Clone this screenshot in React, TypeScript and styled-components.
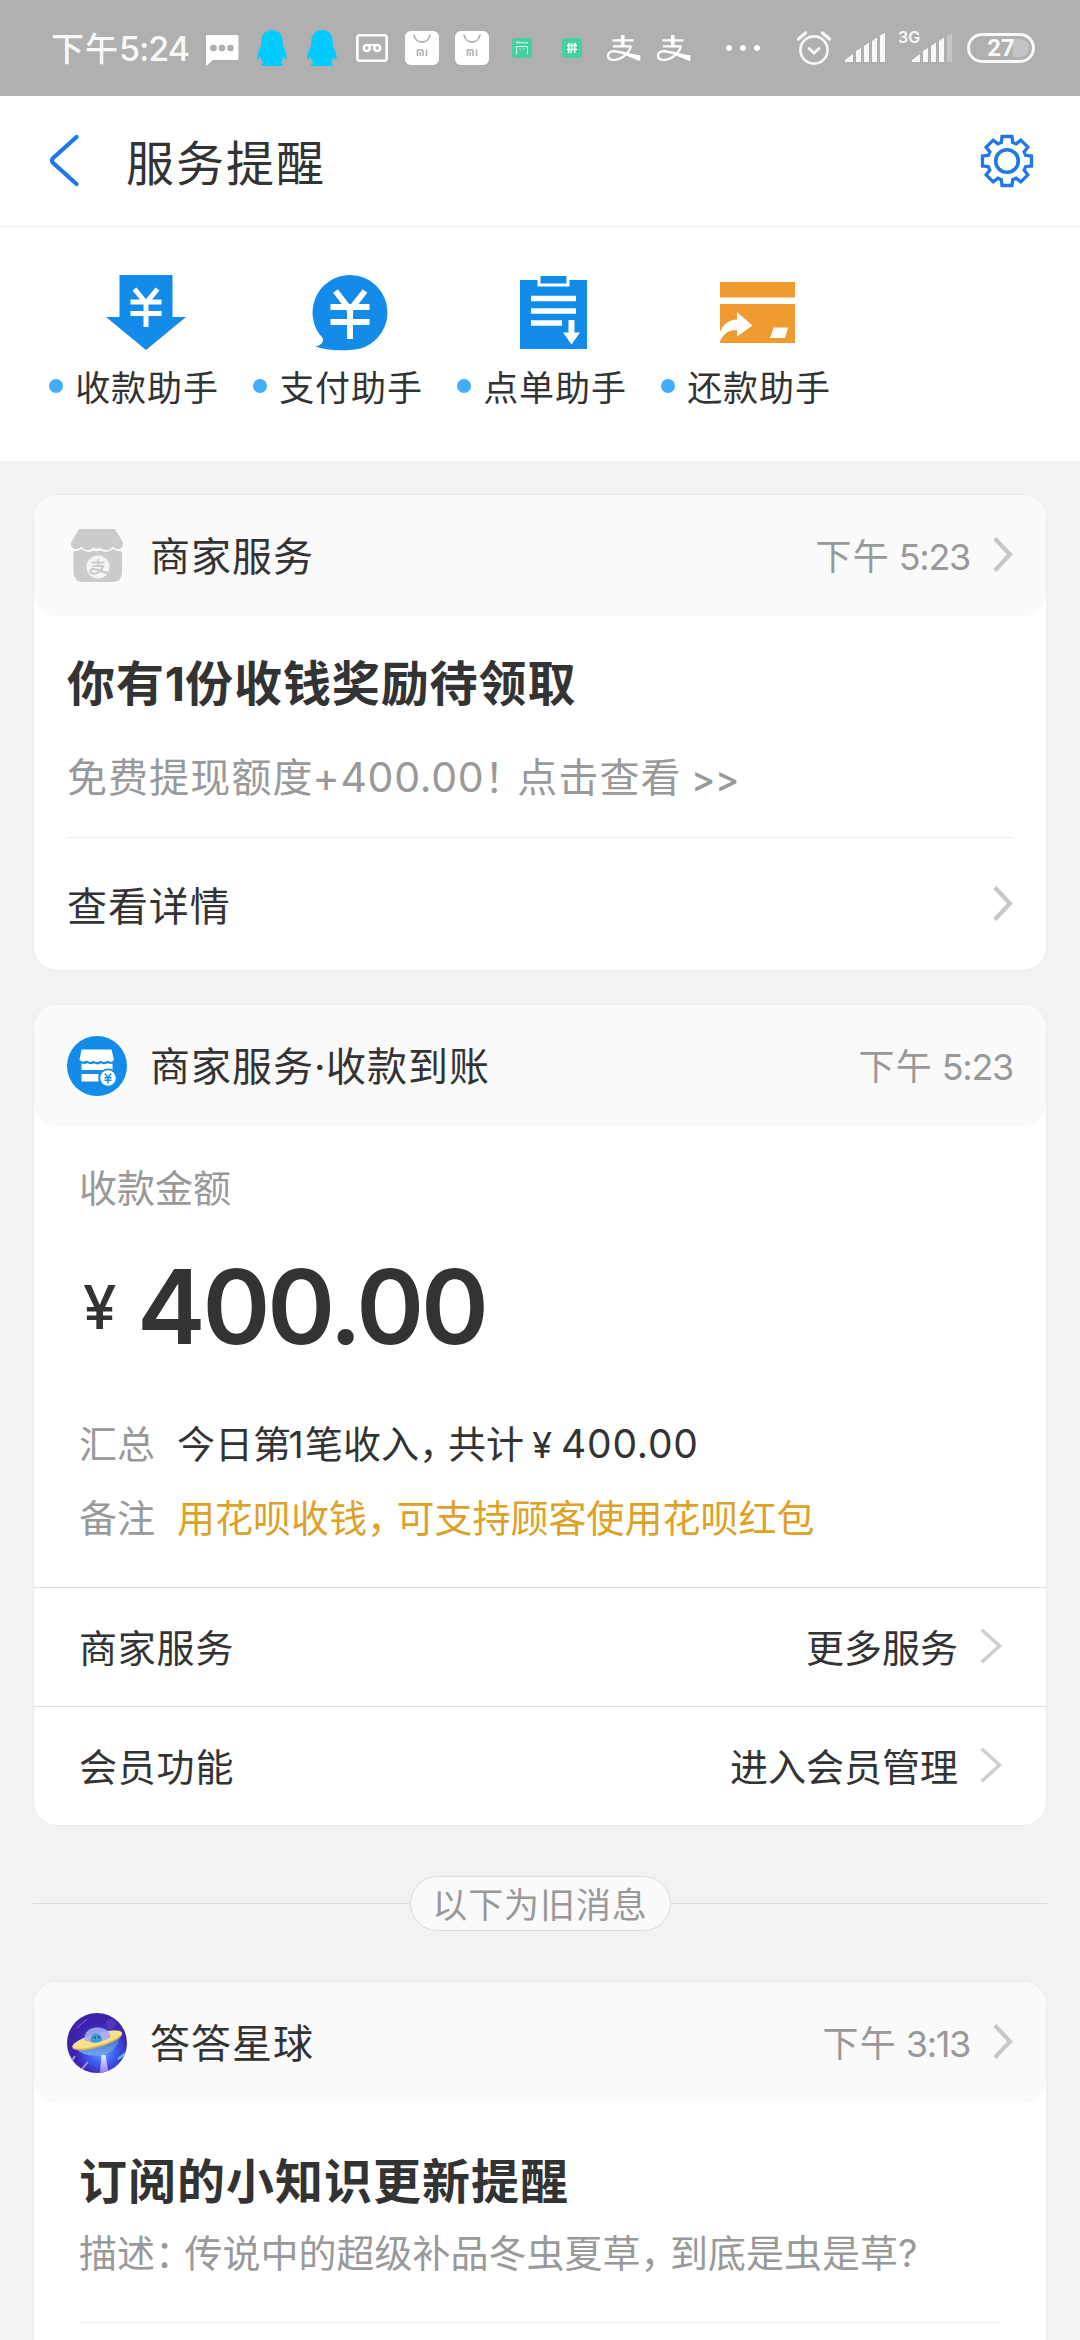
import React from 'react';
import styled, { createGlobalStyle } from 'styled-components';

const cjk = '"Noto Sans CJK SC", "Noto Sans", sans-serif';
const latin = 'Inter, "Noto Sans CJK SC", sans-serif';

const GlobalStyle = createGlobalStyle`
  * { box-sizing: border-box; }
  html, body { margin: 0; padding: 0; background: #f2f2f2; }
  body { font-family: ${cjk}; color: #333; }
`;

const Screen = styled.div`
  width: 1080px;
  height: 2340px;
  overflow: hidden;
  background: #f2f2f2;
  display: flex;
  flex-direction: column;
`;

/* ---------- text ---------- */

const Text = styled.span<{ $size: number; $gap?: number; $color?: string; $bold?: boolean; $lh?: number }>`
  display: block;
  font-size: ${(p) => p.$size}px;
  line-height: ${(p) => p.$lh ?? 50}px;
  letter-spacing: ${(p) => p.$gap ?? 0}px;
  color: ${(p) => p.$color ?? '#333'};
  font-weight: ${(p) => (p.$bold ? 700 : 400)};
  white-space: pre;
`;

const Num = styled.span<{ $size?: number; $gap?: number; $pull?: number; $weight?: number }>`
  font-family: ${latin};
  font-size: ${(p) => (p.$size ? `${p.$size}px` : 'inherit')};
  font-weight: ${(p) => p.$weight ?? 'inherit'};
  letter-spacing: ${(p) => p.$gap ?? 0}px;
  margin-left: ${(p) => -(p.$pull ?? 0)}px;
  line-height: 1;
`;

const Tight = styled.span<{ $gap: number }>`
  letter-spacing: ${(p) => p.$gap}px;
`;

/* ---------- status bar ---------- */

const StatusBar = styled.header`
  height: 96px;
  flex: none;
  background: #b0b0b0;
  display: flex;
  align-items: center;
  justify-content: space-between;
  padding: 0 45px 0 51px;
`;

const StatusGroup = styled.div`
  display: flex;
  align-items: center;
`;

const Clock = styled.div`
  display: flex;
  align-items: baseline;
  width: 154px;
  padding-bottom: 3px;
  font-size: 33px;
  line-height: 40px;
  font-weight: 500;
  color: #f8f8f8;
  letter-spacing: 1px;
  white-space: pre;
`;

const Slot = styled.div<{ $w: number }>`
  width: ${(p) => p.$w}px;
  height: 40px;
  display: flex;
  align-items: center;
`;

const ChatIcon = () => (
  <svg width="34" height="40" viewBox="0 0 34 40">
    <path d="M1 7h31q1.500 0 1.500 1.500v22q0 1.500-1.500 1.500H8l-7 6z" fill="#fff" />
    <g fill="#b0b0b0">
      <circle cx="8.500" cy="20" r="3.300" />
      <circle cx="17" cy="20" r="3.300" />
      <circle cx="25.500" cy="20" r="3.300" />
    </g>
  </svg>
);

const PenguinIcon = () => (
  <svg width="30" height="40" viewBox="0 0 30 40">
    <path
      d="M15 2C8 2 4.300 7 4.300 13.500c0 2 .1 4-1 6C1.500 23 .4 26 .4 29c0 3 1.100 3 3.100-.6.5 2.600 1.500 4.600 3.200 6.200-2 .5-2.900 1.300-2.700 2.400C4.300 38.300 8 38 10.500 38h9c2.500 0 6.200.3 6.500-1 .2-1.100-.7-1.900-2.700-2.400 1.700-1.600 2.700-3.600 3.200-6.200 2 3.600 3.100 3.600 3.100.6 0-3-1.100-6-2.900-9.500-1.100-2-1-4-1-6C25.700 7 22 2 15 2z"
      fill="#00cbff"
    />
  </svg>
);

const CassetteIcon = () => (
  <svg width="32" height="40" viewBox="0 0 32 40">
    <rect x="1.300" y="7.300" width="29.400" height="25.400" rx="2.500" fill="none" stroke="#fff" strokeWidth="2.600" />
    <g fill="none" stroke="#fff" strokeWidth="2.600">
      <circle cx="10.800" cy="20" r="3" />
      <circle cx="21.200" cy="20" r="3" />
      <path d="M10.800 17h10.400" strokeWidth="1.800" />
    </g>
  </svg>
);

const BagIcon = () => (
  <svg width="34" height="40" viewBox="0 0 34 40">
    <rect y="3" width="34" height="34" rx="6" fill="#fff" />
    <g fill="none" stroke="#b0b0b0">
      <path d="M9 6.500c1 10 15 10 16 0" strokeWidth="1.800" />
      <path d="M12.500 28v-6h4.500q1 0 1 1v5M15.300 24v4M21.500 21.500V28" strokeWidth="1.600" />
    </g>
  </svg>
);

const GreenIcon = ({ kind }: { kind: 'shop' | 'pin' }) => (
  <svg width="20" height="40" viewBox="0 0 20 40">
    <rect y="10" width="20" height="20" rx="3.500" fill="#45d0a0" />
    {kind === 'shop' ? (
      <path d="M4 14.800h12M6 14v-1M4.500 26v-7.500h11V26M8 20.500v1M12 20.500v1" fill="none" stroke="#e4fff5" strokeWidth="1" />
    ) : (
      <path d="M5 17.500h10M5 21.500h10M6.800 15v9.500l-1 .5M9.800 15.500V22l-1 3M12.800 15v10M9 15.200l1 1.500M13.800 15l-1 1.500" fill="none" stroke="#fff" strokeWidth="1.300" />
    )}
  </svg>
);

const AlipayIcon = () => (
  <svg width="34" height="40" viewBox="0 0 34 40">
    <g fill="none" stroke="#fff">
      <path d="M5.500 12.300h21M6 18.300h18.500" strokeWidth="2.300" />
      <path d="M15.700 7v11" strokeWidth="3.600" />
      <path d="M24 18.500C21.500 26 13.500 32.300 6.500 32 2.300 31.800.9 29.500 1 27.300 1.200 24 5 22.600 9.200 23.300" strokeWidth="2.200" />
    </g>
    <path d="M6 22.300C13 21.500 22 26 33.300 27.300V33C24 30.500 16 24.800 6 24.300z" fill="#fff" />
  </svg>
);

const DotsIcon = () => (
  <svg width="36" height="40" viewBox="0 0 36 40" fill="#fff">
    <circle cx="4" cy="20" r="2.900" />
    <circle cx="18" cy="20" r="2.900" />
    <circle cx="32" cy="20" r="2.900" />
  </svg>
);

const AlarmIcon = () => (
  <svg width="36" height="40" viewBox="0 0 36 40" fill="none" stroke="#f8f8f8" strokeLinecap="round">
    <circle cx="18" cy="22" r="13.600" strokeWidth="2.600" />
    <path d="M2.500 11l7-6M33.500 11l-7-6" strokeWidth="3.400" />
    <path d="M13.200 20.500l4.800 4.500 5-4.500" strokeWidth="2.800" />
  </svg>
);

const SignalIcon = ({ label, weak }: { label?: string; weak?: boolean }) => {
  const off = label ? 14 : 0;
  return (
    <svg width={40 + off} height="40" viewBox={`${-off} 0 ${40 + off} 40`} fill="#f8f8f8">
      {label && (
        <text x={-off} y="15" fontFamily="Inter, sans-serif" fontSize="16" fontWeight="600">
          {label}
        </text>
      )}
      <path d="M0 32L8 26V34H0z" />
      <path d="M11 23l5-3v14h-5z" />
      <path d="M19 18l5-3.500V34h-5z" />
      <path d="M27 13l5-3.500V34h-5z" />
      <path d="M35 7.500L40 5v29h-5z" opacity={weak ? 0.3 : 1} />
    </svg>
  );
};

const Battery = styled.div`
  width: 68px;
  height: 30px;
  border: 3px solid #f8f8f8;
  border-radius: 15px;
  display: flex;
  align-items: center;
  justify-content: center;
  padding: 3px 3px;
  background: linear-gradient(90deg, transparent 0 40px, #c4c4c4 40px) content-box;
  font-family: Roboto, Inter, sans-serif;
  font-size: 24px;
  font-weight: 700;
  line-height: 24px;
  color: #f8f8f8;
`;

/* ---------- title bar ---------- */

const TitleBar = styled.div`
  height: 131px;
  flex: none;
  background: #fff;
  border-bottom: 1px solid #ececec;
  display: flex;
  align-items: center;
  padding: 0 45px 0 49px;
`;

const Title = styled.h1`
  margin: 0 auto 0 46px;
  padding-bottom: 3px;
  font-size: 48px;
  font-weight: 400;
  letter-spacing: 2px;
  line-height: 60px;
`;

const BackIcon = () => (
  <svg width="31" height="54" viewBox="0 0 31 54" fill="none" stroke="#2077e6" strokeWidth="4.200" strokeLinecap="round">
    <path d="M27.500 3L4.200 24Q1.800 26.500 4.200 29L27.500 50" />
  </svg>
);

/* Outline of an eight-toothed wheel. */
const gearPath = (() => {
  const pts: string[] = [];
  for (let i = 0; i < 8; i++) {
    const base = i * 45;
    [
      [-17, 19.4],
      [-11.5, 25],
      [11.5, 25],
      [17, 19.4],
    ].forEach(([a, r]) => {
      const t = ((base + a) * Math.PI) / 180;
      pts.push(`${(28 + r * Math.sin(t)).toFixed(2)} ${(28 - r * Math.cos(t)).toFixed(2)}`);
    });
  }
  return `M${pts.join('L')}Z`;
})();

const GearIcon = () => (
  <svg width="56" height="56" viewBox="0 0 56 56" fill="none" stroke="#2077e6" strokeWidth="3.300">
    <path d={gearPath} />
    <circle cx="28" cy="28" r="11.300" strokeWidth="3.600" />
  </svg>
);

/* ---------- assistants ---------- */

const Assistants = styled.nav`
  height: 234px;
  flex: none;
  background: #fff;
  display: flex;
  padding: 45px 0 0 49px;
`;

const Assistant = styled.a`
  width: 204px;
  display: grid;
  grid-template-columns: 26px 144px;
  grid-template-rows: 82px 64px;
  align-items: center;
  justify-items: center;
`;

const AssistantIcon = styled.div`
  grid-column: 2;
  display: flex;
  padding-right: 3px;
`;

const Dot = styled.i`
  width: 14px;
  height: 14px;
  border-radius: 50%;
  background: #42adff;
  justify-self: start;
`;

const ReceiveIcon = () => (
  <svg width="80" height="78" viewBox="0 0 80 78">
    <path d="M13.500 1h53v42H80L40 76 0 43h13.500z" fill="#128ce8" />
    <g fill="none" stroke="#fff" strokeWidth="5">
      <path d="M28.500 15L40 29 51.500 15" />
      <path d="M24.500 28h31M24.500 39.500h31M40 27v26" />
    </g>
  </svg>
);

const PayIcon = () => (
  <svg width="76" height="78" viewBox="0 0 76 78">
    <path d="M38 1a37.500 37.500 0 0 1 0 75Q14 77 3.500 72.500q8-2 7.500-8A37.500 37.500 0 0 1 38 1z" fill="#128ce8" />
    <g fill="none" stroke="#fff" strokeWidth="6">
      <path d="M23.500 17L38 36 53 17" />
      <path d="M18.500 33h39M18.500 48h39M38 34v31" />
    </g>
  </svg>
);

const OrderIcon = () => (
  <svg width="67" height="78" viewBox="0 0 67 78">
    <path d="M0 6h17.500v6.500h32V6H67v69H0z" fill="#128ce8" />
    <path d="M20.500 2h26v7.500h-26z" fill="#128ce8" />
    <path d="M11 24.500h45M11 37h45M11 49h31" stroke="#fff" strokeWidth="5.500" />
    <path d="M48.500 46h6v12.500H60L51.500 70.500 43 58.500h5.500z" fill="#fff" />
  </svg>
);

const RepayIcon = () => (
  <svg width="75" height="78" viewBox="0 0 75 78">
    <path d="M0 8h75v15.500H0zM0 30h75v39H0z" fill="#f09b2f" />
    <path d="M0 67v-9C3 50 9 46 17 45.500V38l15.500 13.500L17 62.500V56C9 56 4 59 0 67z" fill="#fff" />
    <path d="M53.500 53.500H68l-3 10.500H50z" fill="#fff" />
  </svg>
);

/* ---------- cards ---------- */

const Feed = styled.main`
  padding: 33px 33px 0;
  display: flex;
  flex-direction: column;
`;

const Card = styled.section<{ $gap?: number }>`
  margin-top: ${(p) => p.$gap ?? 0}px;
  border: 1px solid #ececec;
  border-radius: 24px;
  background: #fff;
  overflow: hidden;
`;

const CardHead = styled.div`
  height: 121px;
  background: #fafafa;
  border-radius: 23px;
  padding: 0 33px;
  display: flex;
  align-items: center;
`;

const CardName = styled.div`
  margin: 0 auto 0 23px;
  padding-bottom: 4px;
`;

const CardBody = styled.div<{ $pad: string }>`
  padding: ${(p) => p.$pad};
`;

const Gap = styled.div<{ $h: number }>`
  height: ${(p) => p.$h}px;
`;

const Rule = styled.hr`
  margin: 0;
  border: 0;
  height: 1px;
  background: #eee;
`;

const LinkRow = styled.a`
  height: 132px;
  display: flex;
  align-items: center;
  justify-content: space-between;
  padding: 0 0 1px;
`;

const ServiceRow = styled.a`
  height: 119px;
  border-top: 1px solid #dcdcdc;
  display: flex;
  align-items: center;
  justify-content: space-between;
  padding: 0 43px 3px 45px;
`;

const RowAction = styled.span`
  display: flex;
  align-items: center;
  gap: 22px;
`;

const Chevron = ({ thin }: { thin?: boolean }) => (
  <svg width={thin ? 23 : 20} height="36" viewBox={thin ? '0 0 23 36' : '0 0 20 36'} fill="none" strokeLinecap="square">
    {thin ? (
      <path d="M3 3L19.500 18 3 33" stroke="#cfcfcf" strokeWidth="3.600" />
    ) : (
      <path d="M3.300 3L17 17.500 3.300 32" stroke="#c8c8cc" strokeWidth="4.200" />
    )}
  </svg>
);

const Time = styled.div`
  display: flex;
  align-items: center;
  gap: 23px;
  padding-bottom: 2px;
`;

const TimeText = styled(Text)`
  padding-bottom: 2px;
`;

const Amount = styled.div`
  height: 100px;
  margin-top: 49px;
  display: flex;
  align-items: center;
  font-family: ${latin};
`;

const Yen = styled.span`
  width: 58px;
  padding-left: 4px;
  font-size: 60px;
  line-height: 100px;
  font-weight: 500;
`;

const Figure = styled.strong`
  font-size: 103px;
  line-height: 100px;
  font-weight: 600;
  letter-spacing: -3.1px;
`;

const Detail = styled.div<{ $gap: number }>`
  margin-top: ${(p) => p.$gap}px;
  display: grid;
  grid-template-columns: 98px 1fr;
`;

const Separator = styled.div`
  margin: 50px 0;
  height: 55px;
  display: flex;
  align-items: center;
  &::before,
  &::after {
    content: '';
    flex: 1;
    height: 1px;
    background: #dcdcdc;
  }
`;

const Pill = styled.span`
  width: 261px;
  height: 55px;
  border: 1px solid #dcdcdc;
  border-radius: 28px;
  background: #fafafa;
  display: flex;
  align-items: center;
  justify-content: center;
  padding-bottom: 2px;
`;

const ShopIcon = () => (
  <svg width="60" height="60" viewBox="0 0 60 60">
    <path d="M12 3h36l8 13.500c.5 4-2 6.500-4.500 6.500-3 0-4.500-1.500-6-2.500C43.500 23.500 41 24.500 38.500 24c-2.500 0-4-1.300-5.500-2.700-1 1.700-5 1.700-6.500 0-1.500 1.400-3 2.700-5.500 2.700s-5-1-6.500-3.500C13 21.500 12 23 9 23c-3 0-5.500-2.500-5-6.500z" fill="#cbcbcb" />
    <path d="M6.500 25.500q4 0 8-2.500 6 5 12.500 1.500 3 1.500 6.500 0Q40 28 46 23q4 2.500 9 2.500V46q0 10-10 10H16.500q-10 0-10-10z" fill="#cbcbcb" />
    <circle cx="31" cy="41" r="11.500" fill="#f4f4f4" />
    <g fill="none" stroke="#cbcbcb" strokeWidth="1.800">
      <path d="M24.500 36.500h13M25.500 40h11M31 33v7" />
      <path d="M36.500 40c-3 6-8 8.500-11.500 7.500-3-1.200-1.500-5 2.500-4.500 4 .6 8 3.500 14 4" strokeWidth="2.200" />
    </g>
  </svg>
);

const MerchantIcon = () => (
  <svg width="60" height="60" viewBox="0 0 60 60">
    <circle cx="30" cy="30" r="30" fill="#128ce8" />
    <path d="M14.500 13.500h30L47 24q-3 3.500-6.500.5-3 3-7 .3-3.500 2.500-7 0-3.500 2.500-7-.3-3.500 2.500-7-.5z" fill="#fff" />
    <path d="M14.500 27.500q3.500 1.200 6-.5 3.500 2.500 6.500.3 3.500 2.200 7 0 3.500 2 6.500-.3 2.500 1.500 5 .5v6.500h-31z" fill="#fff" />
    <path d="M14.500 38h17v7.500h-17z" fill="#fff" />
    <circle cx="41" cy="42" r="9.500" fill="#128ce8" />
    <circle cx="41" cy="42" r="7.800" fill="#fff" />
    <path d="M37.800 37.500l3.200 4 3.200-4M37.500 41.800h7M37.500 44.300h7M41 41v6.500" fill="none" stroke="#128ce8" strokeWidth="1.500" />
  </svg>
);

const PlanetIcon = () => (
  <svg width="60" height="60" viewBox="0 0 60 60">
    <defs>
      <radialGradient id="space" cx="0.58" cy="0.62" r="0.58">
        <stop offset="0" stopColor="#6db4ff" />
        <stop offset="0.4" stopColor="#3f5cf0" />
        <stop offset="0.75" stopColor="#3b25b4" />
        <stop offset="1" stopColor="#3d22a6" />
      </radialGradient>
      <linearGradient id="beam" x1="0" y1="0" x2="0" y2="1">
        <stop offset="0" stopColor="#e4f0ff" />
        <stop offset="1" stopColor="#9a78f2" />
      </linearGradient>
      <linearGradient id="belly" x1="0" y1="0" x2="0" y2="1">
        <stop offset="0" stopColor="#4470c8" />
        <stop offset="1" stopColor="#6fa6f0" />
      </linearGradient>
      <clipPath id="disc">
        <circle cx="30" cy="30" r="30" />
      </clipPath>
    </defs>
    <g clipPath="url(#disc)">
      <rect width="60" height="60" fill="url(#space)" />
      <circle cx="44" cy="11" r="5" fill="#5433bd" />
      <path d="M10 15L20 6" stroke="#6d48cf" strokeWidth="1.600" />
      <path d="M51 46l8-6" stroke="#5fb4ff" strokeWidth="2.400" />
      <path d="M14 57l7-8M4 49l4-6" stroke="#a79be0" strokeWidth="1.800" />
      <path d="M34.500 42h4l3 18H33z" fill="url(#beam)" />
      <path d="M9 36L53 24Q49 39 35 42 18 44.500 9 36z" fill="url(#belly)" />
      <ellipse cx="30.300" cy="27.500" rx="26" ry="6.800" transform="rotate(-16 30.300 27.500)" fill="#e0b04e" />
      <ellipse cx="30.200" cy="26.600" rx="25.600" ry="6" transform="rotate(-16 30.200 26.600)" fill="#f6e08c" />
      <path d="M17.500 27C17 19 22.500 14.500 30 14.500S43 18 43.500 24c-6 5-19 7-26 3z" fill="#a9a6f0" opacity="0.9" />
      <path d="M23.500 28.500c0-5 1.500-8 5.500-8s6 3 6 7c-3 2.500-8.500 3-11.500 1z" fill="#369fd6" />
      <circle cx="28" cy="24.500" r="0.900" fill="#173a80" />
      <circle cx="32" cy="24" r="0.900" fill="#173a80" />
    </g>
  </svg>
);

const assistants = [
  { label: '收款助手', icon: <ReceiveIcon /> },
  { label: '支付助手', icon: <PayIcon /> },
  { label: '点单助手', icon: <OrderIcon /> },
  { label: '还款助手', icon: <RepayIcon /> },
];

const services = [
  { label: '商家服务', action: '更多服务' },
  { label: '会员功能', action: '进入会员管理' },
];

const Stamp = ({ value, arrow }: { value: string; arrow?: boolean }) => (
  <Time>
    <TimeText $size={36} $gap={1.200} $color="#999">
      下午<Num $size={36} $gap={-1.300}>{` ${value}`}</Num>
    </TimeText>
    {arrow && <Chevron />}
  </Time>
);

export default function App() {
  return (
    <>
      <GlobalStyle />
      <Screen>
        <StatusBar>
          <StatusGroup>
            <Clock>
              下午<Num $size={34} $gap={-1}>5:24</Num>
            </Clock>
            <Slot $w={52}><ChatIcon /></Slot>
            <Slot $w={50}><PenguinIcon /></Slot>
            <Slot $w={49}><PenguinIcon /></Slot>
            <Slot $w={49}><CassetteIcon /></Slot>
            <Slot $w={50}><BagIcon /></Slot>
            <Slot $w={57}><BagIcon /></Slot>
            <Slot $w={50}><GreenIcon kind="shop" /></Slot>
            <Slot $w={45}><GreenIcon kind="pin" /></Slot>
            <Slot $w={50}><AlipayIcon /></Slot>
            <Slot $w={68}><AlipayIcon /></Slot>
            <Slot $w={36}><DotsIcon /></Slot>
          </StatusGroup>
          <StatusGroup>
            <Slot $w={49}><AlarmIcon /></Slot>
            <Slot $w={53}><SignalIcon /></Slot>
            <Slot $w={69}><SignalIcon label="3G" weak /></Slot>
            <Battery>27</Battery>
          </StatusGroup>
        </StatusBar>

        <TitleBar>
          <BackIcon />
          <Title>服务提醒</Title>
          <GearIcon />
        </TitleBar>

        <Assistants>
          {assistants.map((a) => (
            <Assistant key={a.label}>
              <AssistantIcon>{a.icon}</AssistantIcon>
              <Dot />
              <Text $size={35} $gap={0.9}>{a.label}</Text>
            </Assistant>
          ))}
        </Assistants>

        <Feed>
          <Card>
            <CardHead>
              <ShopIcon />
              <CardName>
                <Text $size={40} $gap={1}>商家服务</Text>
              </CardName>
              <Stamp value="5:23" arrow />
            </CardHead>
            <CardBody $pad="34px 33px 0">
              <Text $size={48} $gap={0.9} $bold $lh={60}>
                你有<Num $size={47} $gap={0}>1</Num>份收钱奖励待领取
              </Text>
              <Gap $h={40} />
              <Text $size={40} $gap={1.100} $color="#999">
                免费提现额度<Num $size={41} $gap={0.7} $pull={1}>+400.00</Num>
                <Tight $gap={-7}>！</Tight>点击查看<Num $size={36} $weight={500}>{' >>'}</Num>
              </Text>
              <Gap $h={37} />
              <Rule />
              <LinkRow>
                <Text $size={40} $gap={0.9}>查看详情</Text>
                <Chevron />
              </LinkRow>
            </CardBody>
          </Card>

          <Card $gap={33}>
            <CardHead>
              <MerchantIcon />
              <CardName>
                <Text $size={40} $gap={1}>
                  商家服务<Num $gap={0.5}>·</Num>收款到账
                </Text>
              </CardName>
              <Stamp value="5:23" />
            </CardHead>
            <CardBody $pad="38px 44px 46px 45px">
              <Text $size={38} $lh={44} $color="#999">收款金额</Text>
              <Amount>
                <Yen>¥</Yen>
                <Figure>400.00</Figure>
              </Amount>
              <Detail $gap={60}>
                <Text $size={38} $color="#999">汇总</Text>
                <Text $size={38}>
                  今日第<Num $size={37} $gap={1.500} $pull={2.500}>1</Num>笔收入<Tight $gap={-9}>，</Tight>共计
                  <Num $size={36} $gap={-2}> </Num>
                  <Num $size={36} $gap={9}>¥</Num>
                  <Num $size={39} $gap={0.8}>400.00</Num>
                </Text>
              </Detail>
              <Detail $gap={24}>
                <Text $size={38} $color="#999">备注</Text>
                <Text $size={38} $color="#dea127">
                  用花呗收钱<Tight $gap={-8.500}>，</Tight>可支持顾客使用花呗红包
                </Text>
              </Detail>
            </CardBody>
            {services.map((s) => (
              <ServiceRow key={s.label}>
                <Text $size={38} $gap={0.8}>{s.label}</Text>
                <RowAction>
                  <Text $size={38}>{s.action}</Text>
                  <Chevron thin />
                </RowAction>
              </ServiceRow>
            ))}
          </Card>

          <Separator>
            <Pill>
              <Text $size={35} $gap={0.9} $color="#999">以下为旧消息</Text>
            </Pill>
          </Separator>

          <Card>
            <CardHead>
              <PlanetIcon />
              <CardName>
                <Text $size={40} $gap={1}>答答星球</Text>
              </CardName>
              <Stamp value="3:13" arrow />
            </CardHead>
            <CardBody $pad="45px 44px 100px 45px">
              <Text $size={48} $gap={1} $bold $lh={60}>订阅的小知识更新提醒</Text>
              <Gap $h={20} />
              <Text $size={38} $lh={46} $color="#999">
                描述<Tight $gap={-8.500}>：</Tight>传说中的超级补品冬虫夏草<Tight $gap={-8.500}>，</Tight>到底是虫是草<Num>?</Num>
              </Text>
              <Gap $h={48} />
              <Rule />
            </CardBody>
          </Card>
        </Feed>
      </Screen>
    </>
  );
}
